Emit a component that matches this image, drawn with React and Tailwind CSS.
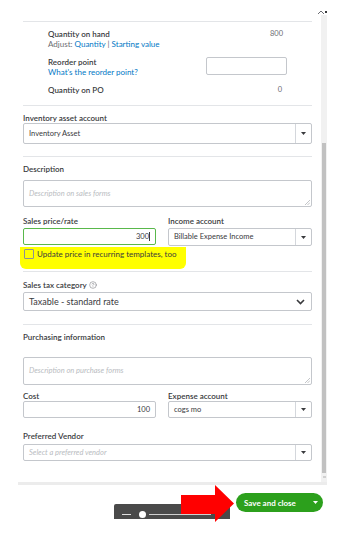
import React from 'react';
import { CircleHelp } from 'lucide-react';

const label = 'text-[8px] leading-[10px] font-semibold text-[#393a3d]';

function Caret() {
    return (
        <svg width="5" height="3" viewBox="0 0 5 3">
            <path d="M0 0h5L2.5 3z" fill="#393a3d" />
        </svg>
    );
}

function SelectBox({ value, placeholder, className }) {
    return (
        <div className={`flex border border-[#c4c7cc] rounded-[2px] bg-white ${className}`}>
            <div className={`flex-1 flex items-center pl-[5px] text-[7.5px] ${placeholder ? 'italic text-[#b9bcc1]' : 'text-[#393a3d]'}`}>
                {value || placeholder}
            </div>
            <div className="w-[16px] border-l border-[#d4d7dc] flex items-center justify-center">
                <Caret />
            </div>
        </div>
    );
}

function TextArea({ placeholder, className }) {
    return (
        <div className={`relative border border-[#c4c7cc] rounded-[2px] bg-white pl-[5px] pt-[4px] leading-[10px] ${className}`}>
            <span className="text-[7.5px] italic text-[#b9bcc1]">{placeholder}</span>
            <svg className="absolute right-[1px] bottom-[1px]" width="5" height="5" viewBox="0 0 5 5">
                <path d="M5 0L0 5M5 2.5L2.5 5" stroke="#9a9da2" strokeWidth="0.6" />
            </svg>
        </div>
    );
}

export default function App() {
    return (
        <div className="relative w-[342px] h-[544px] bg-white overflow-hidden [font-family:Lato,'Noto_Sans',sans-serif]">
            {/* Panel */}
            <div className="ml-[18px] w-[309px] h-[485px] flex border-b-[3px] border-[#ececec]">
                <div className="w-[303px] pl-[5px] pr-[9px]">
                    <div className="h-[21px]" />

                    {/* Quantity */}
                    <div className="border-t border-[#e3e5e8] pt-[7px] pb-[10px] pl-[25px] pr-[25px]">
                        <div className="flex justify-between">
                            <div>
                                <div className={label}>Quantity on hand</div>
                                <div className="text-[8px] leading-[10px] text-[#6b6c72]">
                                    Adjust: <span className="text-[#0077c5]">Quantity</span> | <span className="text-[#0077c5]">Starting value</span>
                                </div>
                            </div>
                            <div className="text-[7.5px] leading-[10px] text-[#6b6c72] pr-[4px]">800</div>
                        </div>
                        <div className="flex justify-between mt-[8px]">
                            <div>
                                <div className={label}>Reorder point</div>
                                <div className="text-[8px] leading-[10px] text-[#0077c5]">What's the reorder point?</div>
                            </div>
                            <div className="w-[81px] h-[18px] border border-[#c4c7cc] rounded-[2px]" />
                        </div>
                        <div className="flex justify-between mt-[8px]">
                            <div className={label}>Quantity on PO</div>
                            <div className="text-[7.5px] leading-[10px] text-[#6b6c72] pr-[5px]">0</div>
                        </div>
                    </div>

                    {/* Inventory asset */}
                    <div className="border-t border-[#e3e5e8] pt-[7px] pb-[12px]">
                        <div className={label}>Inventory asset account</div>
                        <SelectBox value="Inventory Asset" className="h-[21px]" />
                    </div>

                    {/* Description / sales */}
                    <div className="border-t border-[#e3e5e8] pt-[7px]">
                        <div className={label}>Description</div>
                        <TextArea placeholder="Description on sales forms" className="mt-[6px] h-[27px]" />
                        <div className="flex gap-[12px] mt-[9px]">
                            <div className="w-[133px]">
                                <div className={label}>Sales price/rate</div>
                                <div className="mt-[2px] h-[17px] border border-[#59b84b] rounded-[2px] flex items-center justify-end pr-[5px] text-[7.5px] text-[#393a3d]">
                                    300<span className="w-px h-[9px] bg-[#393a3d]" />
                                </div>
                            </div>
                            <div className="flex-1">
                                <div className={label}>Income account</div>
                                <SelectBox value="Billable Expense Income" className="mt-[2px] h-[18px]" />
                            </div>
                        </div>
                        <div className="relative h-[25px]">
                            <div className="absolute left-[-3px] top-[1px] w-[166px] h-[22px] bg-[#ffff00] rounded-b-[6px]" />
                            <div className="relative flex items-center gap-[3px] pl-[1px] pt-[3px]">
                                <div className="w-[10px] h-[10px] border border-[#8d9096] rounded-[1px]" />
                                <span className="text-[8px] leading-[10px] text-[#393a3d]">Update price in recurring templates, too</span>
                            </div>
                        </div>
                    </div>

                    {/* Sales tax */}
                    <div className="border-t border-[#e3e5e8] pt-[8px] pb-[13px]">
                        <div className={`${label} flex items-center gap-[2px]`}>
                            Sales tax category <CircleHelp size={8} strokeWidth={1.5} color="#6b6c72" />
                        </div>
                        <div className="mt-[2px] h-[19px] border border-[#c4c7cc] rounded-[2px] flex items-center justify-between pl-[5px] pr-[6px]">
                            <span className="text-[9px] text-[#393a3d]">Taxable - standard rate</span>
                            <svg width="9" height="6" viewBox="0 0 9 6">
                                <path d="M1 1l3.5 3.5L8 1" stroke="#393a3d" strokeWidth="1.6" fill="none" />
                            </svg>
                        </div>
                    </div>

                    {/* Purchasing */}
                    <div className="border-t border-[#e3e5e8] pt-[7px]">
                        <div className={label}>Purchasing information</div>
                        <TextArea placeholder="Description on purchase forms" className="mt-[15px] h-[28px]" />
                        <div className="flex gap-[12px] mt-[6px]">
                            <div className="w-[133px]">
                                <div className={label}>Cost</div>
                                <div className="h-[17px] border border-[#c4c7cc] rounded-[2px] flex items-center justify-end pr-[5px] text-[7.5px] text-[#393a3d]">100</div>
                            </div>
                            <div className="flex-1">
                                <div className={label}>Expense account</div>
                                <SelectBox value="cogs mo" className="h-[17px]" />
                            </div>
                        </div>
                        <div className={`${label} mt-[13px]`}>Preferred Vendor</div>
                        <SelectBox placeholder="Select a preferred vendor" className="mt-[3px] h-[17px]" />
                    </div>
                </div>

                {/* Scrollbar */}
                <div className="relative w-[6px] pt-[15px]">
                    <svg className="absolute left-[-4px] top-[9px]" width="10" height="6" viewBox="0 0 10 6">
                        <path d="M1 5l3-3 3 3" stroke="#6b6c72" strokeWidth="1" fill="none" />
                        <rect x="8" y="2" width="2" height="2" fill="#393a3d" />
                    </svg>
                    <div className="h-[467px] bg-[#f1f1f1] flex flex-col items-center">
                        <div className="h-[128px]" />
                        <div className="w-[4px] h-[330px] bg-[#c1c1c1]" />
                        <div className="mt-[3px] w-[3px] h-[2px] bg-[#d0d0d0]" />
                    </div>
                </div>
            </div>

            {/* Footer */}
            <div className="flex justify-end pt-[8px] pr-[19px]">
                <div className="w-[87px] h-[19px] rounded-full bg-[#2ca01c] flex items-center pl-[8px] pr-[5px] justify-between">
                    <span className="text-[8px] font-bold text-white">Save and close</span>
                    <svg width="5" height="3" viewBox="0 0 5 3">
                        <path d="M0 0h5L2.5 3z" fill="#fff" />
                    </svg>
                </div>
            </div>

            {/* Zoom slider overlay */}
            <div className="absolute left-[114px] top-[504px] w-[116px] h-[15px] bg-[#4a4a4a] rounded-t-[2px] flex items-end pb-[3px] pl-[8px] gap-[3px]">
                <div className="w-[9px] h-[1px] bg-[#e0e0e0] mb-[1px]" />
                <div className="w-[7px] h-[7px] rounded-full bg-white ml-[5px] mb-[-2px]" />
                <div className="w-[62px] h-[1px] bg-[#d0d0d0] mb-[1px]" />
            </div>

            {/* Red arrow annotation */}
            <svg className="absolute left-[181px] top-[485px]" width="54" height="38" viewBox="0 0 54 38">
                <path d="M0 10H34V0L53 18.5L34 37V29H0Z" fill="#ff0000" />
            </svg>
        </div>
    );
}
